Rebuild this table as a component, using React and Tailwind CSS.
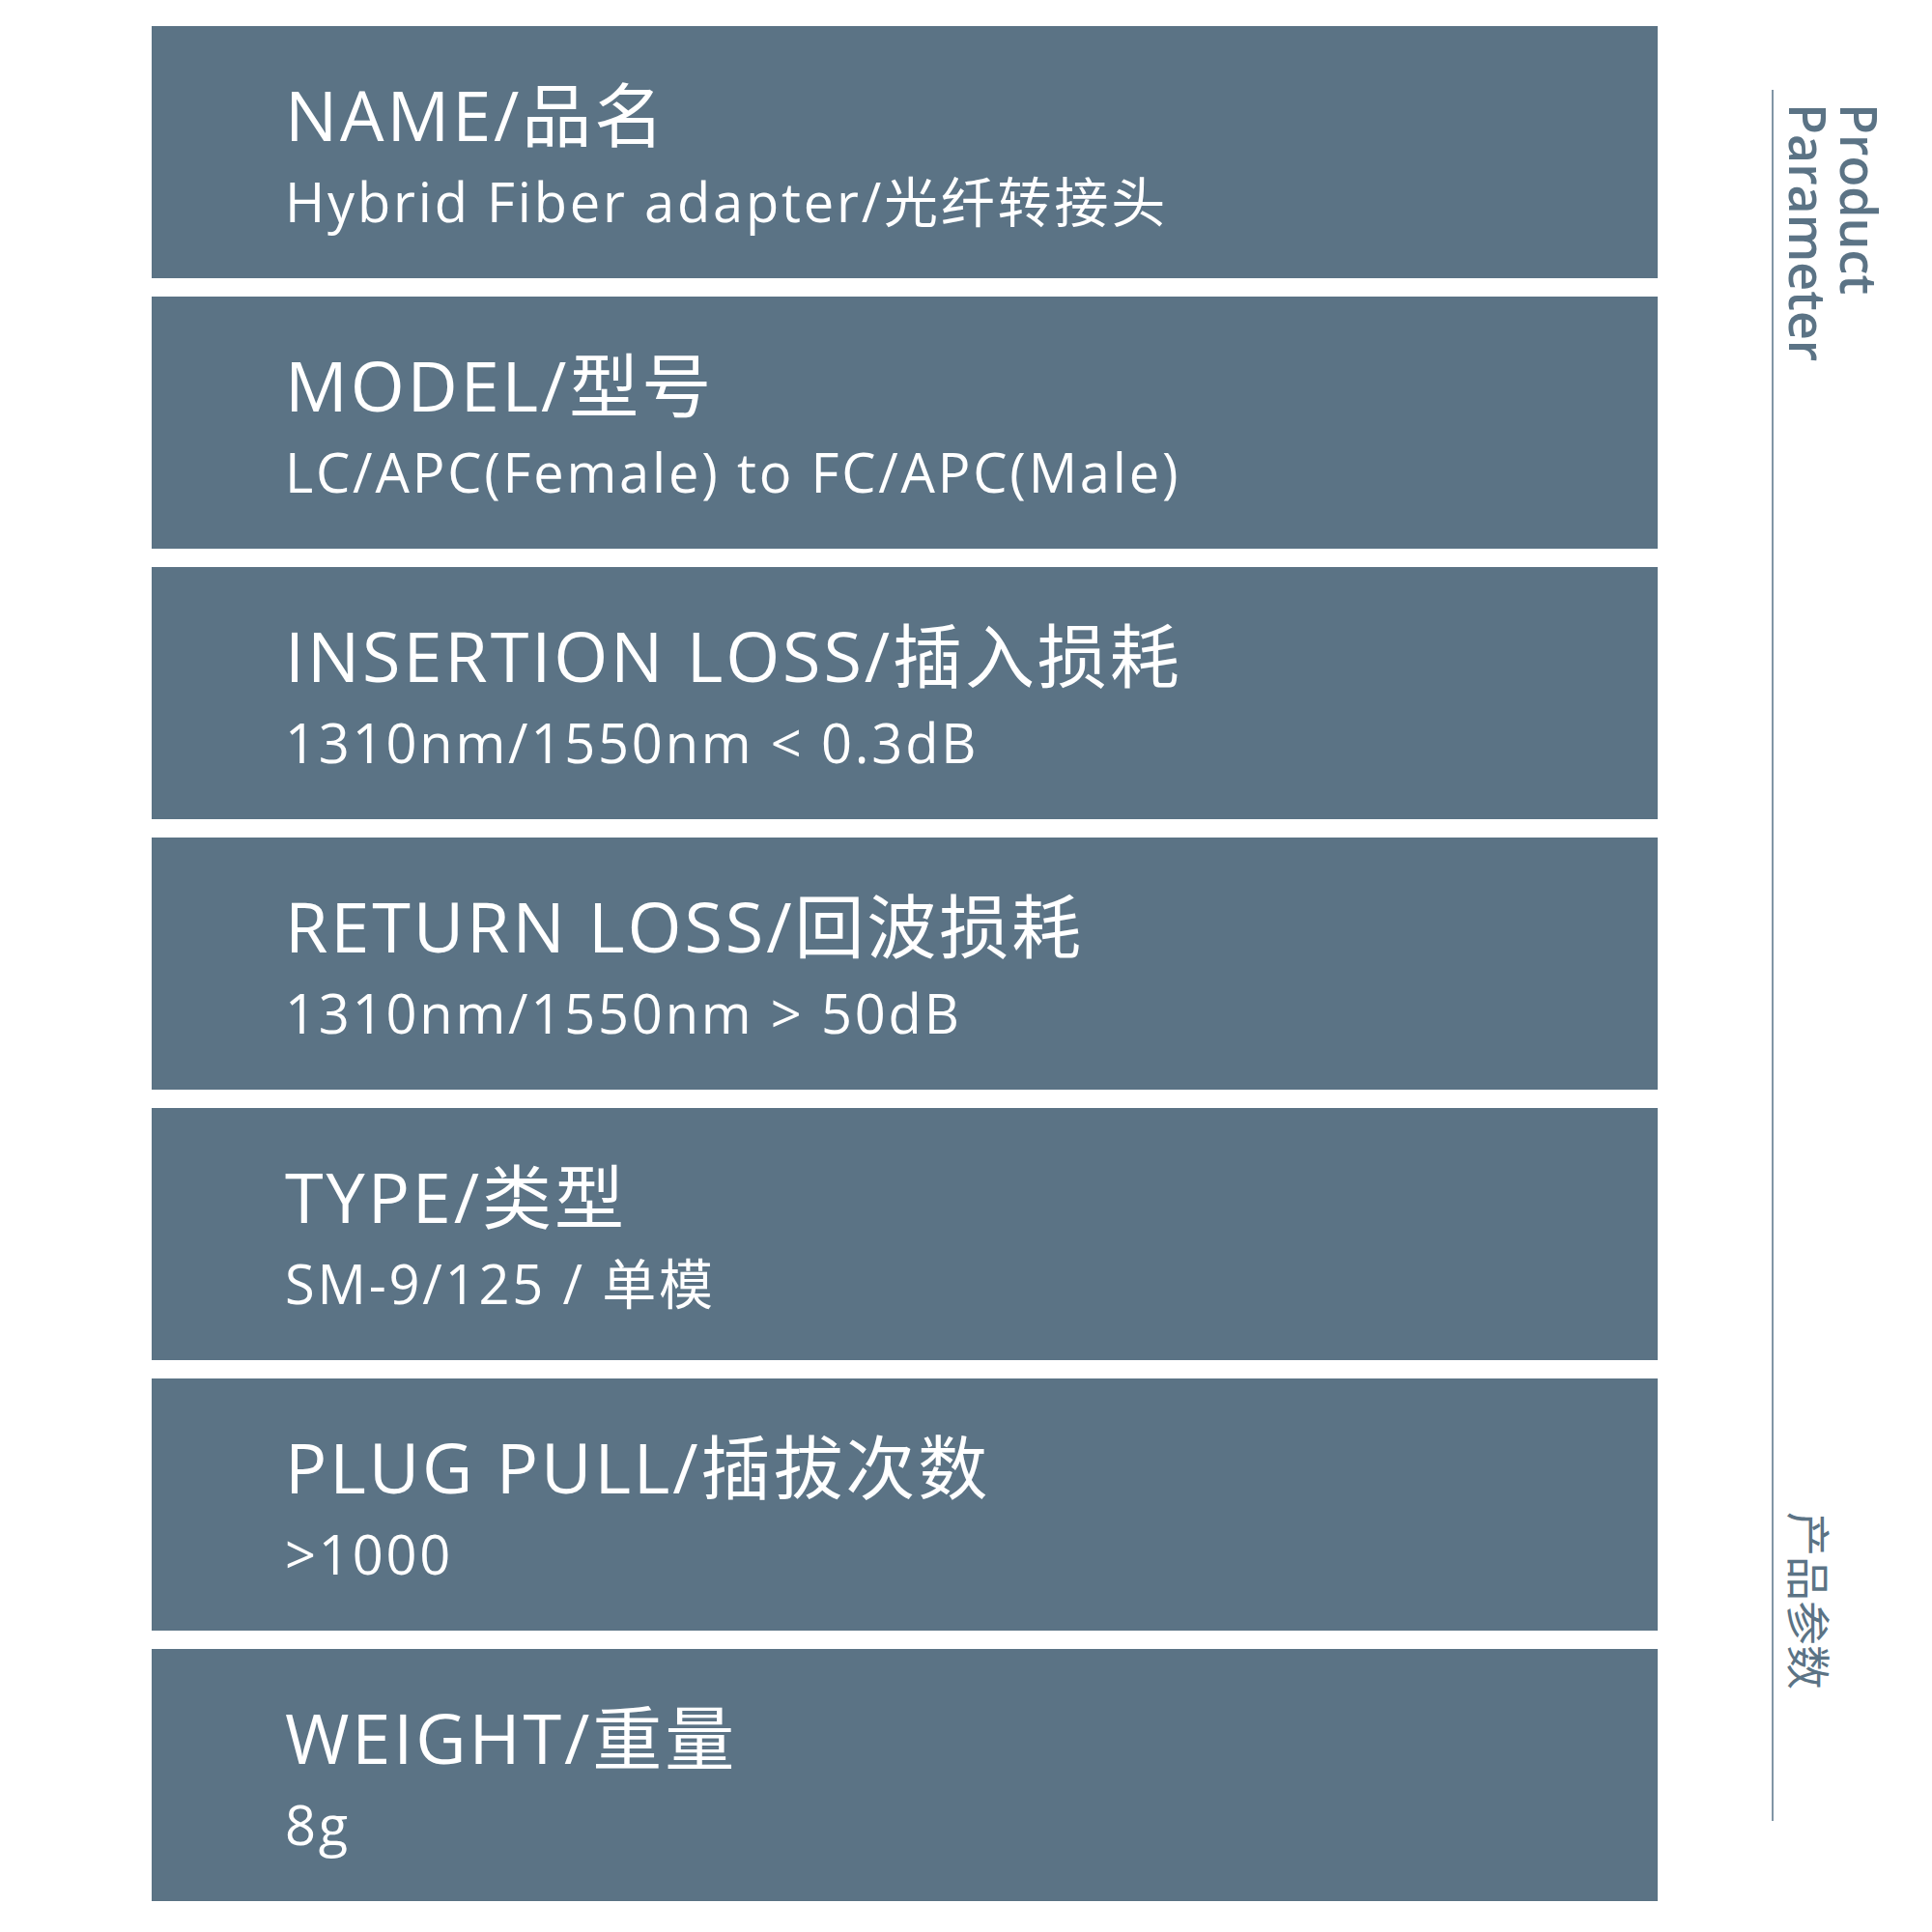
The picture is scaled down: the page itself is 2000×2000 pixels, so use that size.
import React from 'react';

const params = [
  { title: 'NAME/品名', value: 'Hybrid Fiber adapter/光纤转接头' },
  { title: 'MODEL/型号', value: 'LC/APC(Female) to FC/APC(Male)' },
  { title: 'INSERTION LOSS/插入损耗', value: '1310nm/1550nm < 0.3dB' },
  { title: 'RETURN LOSS/回波损耗', value: '1310nm/1550nm > 50dB' },
  { title: 'TYPE/类型', value: 'SM-9/125 / 单模' },
  { title: 'PLUG PULL/插拔次数', value: '>1000' },
  { title: 'WEIGHT/重量', value: '8g' },
];

const font = "font-['Open_Sans','Noto_Sans_CJK_SC',sans-serif]";

const ParamRow = ({ title, value }) => (
  <div className="h-[261px] bg-[#5b7385] pl-[138px] pt-[55px] text-white">
    <div className="text-[72px] leading-[72px] tracking-[0.04em] whitespace-nowrap">{title}</div>
    <div className="mt-[26px] text-[56px] leading-[56px] tracking-[0.05em] whitespace-nowrap">{value}</div>
  </div>
);

export default function App() {
  return (
    <div className={`w-[2000px] h-[2000px] bg-white flex items-start pl-[157px] pt-[27px] ${font}`}>
      {/* parameter rows */}
      <div className="w-[1559px] flex flex-col gap-[19px]">
        {params.map((p, i) => (
          <ParamRow key={i} title={p.title} value={p.value} />
        ))}
      </div>

      {/* side label */}
      <div className="ml-[118px] mt-[66px] h-[1792px] border-l-2 border-[#8195a5] pl-[10px] pt-[14px] pb-[136px] flex flex-col items-start justify-between text-[#5b7385]">
        <div className="[writing-mode:vertical-rl] [text-orientation:sideways] text-[52px] leading-[53px] font-semibold">
          Product<br />Parameter
        </div>
        <div className="ml-[6px] [writing-mode:vertical-rl] [text-orientation:sideways] text-[46px] leading-[46px] font-['Noto_Sans_CJK_SC',sans-serif]">
          产品参数
        </div>
      </div>
    </div>
  );
}
